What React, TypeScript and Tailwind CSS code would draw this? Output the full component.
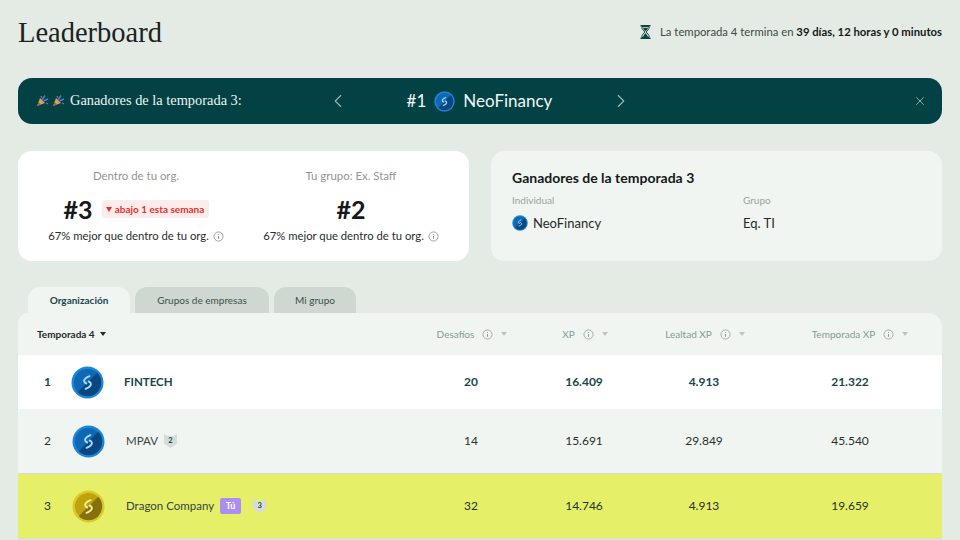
import { ChevronLeft, ChevronRight, X } from 'lucide-react'

const sans = 'font-["Lato","Open_Sans",sans-serif]'

const rows = [
  { rank: '1', name: 'FINTECH', coin: 'blue', desafios: '20', xp: '16.409', lealtad: '4.913', temporada: '21.322' },
  { rank: '2', name: 'MPAV', coin: 'blue', level: '2', desafios: '14', xp: '15.691', lealtad: '29.849', temporada: '45.540' },
  { rank: '3', name: 'Dragon Company', coin: 'gold', you: true, level: '3', desafios: '32', xp: '14.746', lealtad: '4.913', temporada: '19.659' }
]

// S-shaped company coin, the lower right half is a shade darker
function Coin({ size, tone = 'blue' }: { size: number; tone?: string }) {
  const gold = tone === 'gold'
  return (
    <svg width={size} height={size} viewBox="0 0 34 34" className="shrink-0" aria-hidden="true">
      <circle cx="17" cy="17" r="16.5" fill={gold ? '#dcc92e' : '#1c86d6'} />
      <circle cx="17" cy="17" r="14" fill={gold ? '#bfa30a' : '#0f68b4'} />
      <path d="M27 7A14 14 0 0 1 7 27Z" fill={gold ? '#85710a' : '#0a4680'} />
      <path
        d="M19 10.5C16.5 11.5 13.5 13.5 13.5 15.5C13.5 16.8 14.5 17.5 15.8 18M15 23.5C17.5 22.5 20.5 20.5 20.5 18.5C20.5 17.2 19.5 16.5 18.2 16"
        fill="none"
        stroke={gold ? '#f7eb9c' : '#a8d8f7'}
        strokeWidth="2"
        strokeLinecap="round"
      />
    </svg>
  )
}

function InfoIcon({ className }: { className: string }) {
  return (
    <svg viewBox="0 0 12 12" className={className} fill="none" stroke="currentColor" aria-hidden="true">
      <circle cx="6" cy="6" r="5" strokeWidth="0.8" />
      <path d="M6 5.4V8.6M6 3.3V4.2" strokeWidth="1" />
    </svg>
  )
}

function Popper() {
  return (
    <svg width="13" height="13" viewBox="0 0 13 13" aria-hidden="true">
      <path d="M1 12L4 4L9 9Z" fill="#d9a066" />
      <path d="M2.5 8L5 10.5L3 11.4L1.8 10Z" fill="#b5533c" />
      <path d="M6 6L9 1.5M7.5 7L12 5" stroke="#3f88d8" strokeWidth="1.4" />
      <path d="M5 2L6 4M10 9L12 10" stroke="#e0574f" strokeWidth="1.2" />
    </svg>
  )
}

function Hourglass() {
  return (
    <svg width="11" height="14" viewBox="0 0 11 14" aria-hidden="true">
      <path d="M0.5 0.7H10.5M0.5 13.3H10.5" stroke="#0f4245" strokeWidth="1.4" />
      <path d="M2 1.5H9V3.5L6.2 7L9 10.5V12.5H2V10.5L4.8 7L2 3.5Z" fill="none" stroke="#0f4245" strokeWidth="1" />
      <path d="M2.6 2.8H8.4L5.5 6.5ZM5.5 8L8.6 12.4H2.4Z" fill="#0f4245" />
    </svg>
  )
}

function SortCaret({ className }: { className: string }) {
  return <span className={`h-0 w-0 border-x-[3.5px] border-t-[4px] border-x-transparent ${className}`} />
}

function RankBlock({ label, value, note }: { label: string; value: string; note?: string }) {
  return (
    <div className="flex w-[175px] flex-col items-center pt-[17px]">
      <div className="text-[11.4px] leading-[15px] text-[#8f9692]">{label}</div>
      <div className="mt-[8px] flex h-[36px] items-center justify-center gap-[9px]">
        <span className="text-[25px] font-bold leading-none text-[#14191a]">{value}</span>
        {note && (
          <span className="flex h-[18px] w-[107px] items-center justify-center gap-[3px] rounded-[3px] bg-[#fdecec] text-[10px] font-bold text-[#e5322d]">
            <span className="h-0 w-0 border-x-[3.5px] border-t-[5px] border-x-transparent border-t-[#e5322d]" />
            {note}
          </span>
        )}
      </div>
      <div className="mt-[1px] flex items-center gap-[4px] whitespace-nowrap text-[11.3px] leading-[16px] text-[#26302e]">
        67% mejor que dentro de tu org.
        <InfoIcon className="h-[11px] w-[11px] text-[#7d8582]" />
      </div>
    </div>
  )
}

function HeadCell({ label, className = '' }: { label: string; className?: string }) {
  return (
    <div className={`flex items-center justify-center gap-[8px] pl-[2px] text-[10px] text-[#7f9c92] ${className}`}>
      {label}
      <InfoIcon className="h-[11px] w-[11px] text-[#7f9c92]" />
      <SortCaret className="border-t-[#b8c8c1]" />
    </div>
  )
}

export default function App() {
  return (
    <div className={`h-[540px] w-[960px] overflow-hidden bg-[#e4ebe4] px-[18px] ${sans}`}>
      {/* Header */}
      <div className="flex h-[78px] items-start justify-between">
        <h1 className="pt-[15px] font-['Liberation_Serif',serif] text-[28.5px] leading-[36px] text-[#1a2322]">Leaderboard</h1>
        <div className="flex items-center gap-[9px] pt-[24px] text-[11.3px] leading-[16px] text-[#3d4a48]">
          <Hourglass />
          <span>
            La temporada 4 termina en <b className="font-bold text-[#14191a]">39 días, 12 horas y 0 minutos</b>
          </span>
        </div>
      </div>

      {/* Winners banner */}
      <div className="grid h-[46px] grid-cols-[288px_1fr_300px] items-center rounded-[14px] bg-[#024144] pl-[18px] text-white">
        <div className="flex items-center gap-[3px] font-['Liberation_Serif',serif] text-[14.4px] text-[#eef3f0]">
          <Popper />
          <Popper />
          <span className="ml-[2px]">Ganadores de la temporada 3:</span>
        </div>
        <div className="flex items-center justify-between pl-[3px] pr-[10px]">
          <ChevronLeft className="h-[22px] w-[22px] text-[#9db8b6]" strokeWidth={1.2} />
          <div className="flex items-center gap-[8px] text-[17px] text-[#f2f6f4]">
            #1
            <Coin size={21} />
            NeoFinancy
          </div>
          <ChevronRight className="h-[22px] w-[22px] text-[#9db8b6]" strokeWidth={1.2} />
        </div>
        <div className="flex justify-end pr-[15px]">
          <X className="h-[14px] w-[14px] text-[#9db8b6]" strokeWidth={1.5} />
        </div>
      </div>

      {/* Summary cards */}
      <div className="mt-[27px] grid h-[110px] grid-cols-[451px_451px] gap-[22px]">
        <div className="flex justify-center gap-[40px] rounded-[14px] bg-white">
          <RankBlock label="Dentro de tu org." value="#3" note="abajo 1 esta semana" />
          <RankBlock label="Tu grupo: Ex. Staff" value="#2" />
        </div>
        <div className="rounded-[14px] bg-[#f1f5f2] pl-[21px] pt-[17px]">
          <div className="text-[14px] font-bold leading-[20px] text-[#14191a]">Ganadores de la temporada 3</div>
          <div className="mt-[5px] grid grid-cols-[231px_1fr]">
            <div>
              <div className="text-[10px] leading-[14px] text-[#9aa19d]">Individual</div>
              <div className="mt-[5px] flex items-center gap-[5px] text-[13px] leading-[22px] text-[#1f2a29]">
                <Coin size={16} />
                NeoFinancy
              </div>
            </div>
            <div>
              <div className="text-[10px] leading-[14px] text-[#9aa19d]">Grupo</div>
              <div className="mt-[5px] text-[13px] leading-[22px] text-[#1f2a29]">Eq. TI</div>
            </div>
          </div>
        </div>
      </div>

      {/* Tabs */}
      <div className="mt-[26px] flex h-[26px] gap-[5px] pl-[10px] text-[10px]">
        <div className="flex w-[102px] items-center justify-center rounded-t-[12px] bg-[#f1f5f2] font-bold text-[#17474a]">Organización</div>
        <div className="flex w-[134px] items-center justify-center rounded-t-[12px] bg-[#ced8d0] text-[#3d4f4b]">Grupos de empresas</div>
        <div className="flex w-[82px] items-center justify-center rounded-t-[12px] bg-[#ced8d0] text-[#3d4f4b]">Mi grupo</div>
      </div>

      {/* Leaderboard table */}
      <div className="overflow-hidden rounded-tl-[10px] rounded-tr-[14px] bg-[#f1f5f2]">
        <div className="grid h-[42px] grid-cols-[397px_112px_114px_126px_166px] items-center">
          <div className="flex items-center gap-[4px] pl-[19px] text-[10px] font-bold text-[#1d2b2a]">
            Temporada 4
            <SortCaret className="ml-[1px] border-t-[#1d2b2a]" />
          </div>
          <HeadCell label="Desafíos" />
          <HeadCell label="XP" />
          <HeadCell label="Lealtad XP" />
          <HeadCell label="Temporada XP" className="pl-[20px]" />
        </div>

        {rows.map((row) => {
          const first = row.rank === '1'
          return (
            <div
              key={row.rank}
              className={`grid grid-cols-[397px_112px_114px_126px_166px_9px] items-center text-center text-[12px] ${
                first
                  ? 'h-[54px] bg-white font-bold text-[#17474a]'
                  : row.you
                    ? 'h-[65px] border-b border-[#d5dcd3] bg-[#e5f068] text-[#29312a]'
                    : 'h-[65px] border-b border-[#d5dcd3] text-[#29312a]'
              }`}
            >
              <div className="flex items-center text-left">
                <span className={first ? 'w-[53px] pl-[26px]' : 'w-[54px] pl-[26px]'}>{row.rank}</span>
                <Coin size={33} tone={row.coin} />
                <span className={first ? 'ml-[20px] text-[11.5px]' : 'ml-[21px] text-[11.5px] text-[#38443f]'}>{row.name}</span>
                {row.you && (
                  <span className="ml-[6px] flex h-[16px] w-[21px] items-center justify-center rounded-[2px] bg-[#ac8df2] text-[9px] font-bold text-white">Tú</span>
                )}
                {row.level && (
                  <span
                    className={`flex h-[14px] w-[13px] items-center justify-center bg-[#d7dcdb] text-[7.5px] font-bold text-[#17474a] [clip-path:polygon(0_0,30%_14%,70%_14%,100%_0,100%_70%,50%_100%,0_70%)] ${
                      row.you ? 'ml-[12px]' : 'ml-[6px]'
                    }`}
                  >
                    {row.level}
                  </span>
                )}
              </div>
              <span>{row.desafios}</span>
              <span>{row.xp}</span>
              <span>{row.lealtad}</span>
              <span>{row.temporada}</span>
            </div>
          )
        })}
      </div>
    </div>
  )
}
